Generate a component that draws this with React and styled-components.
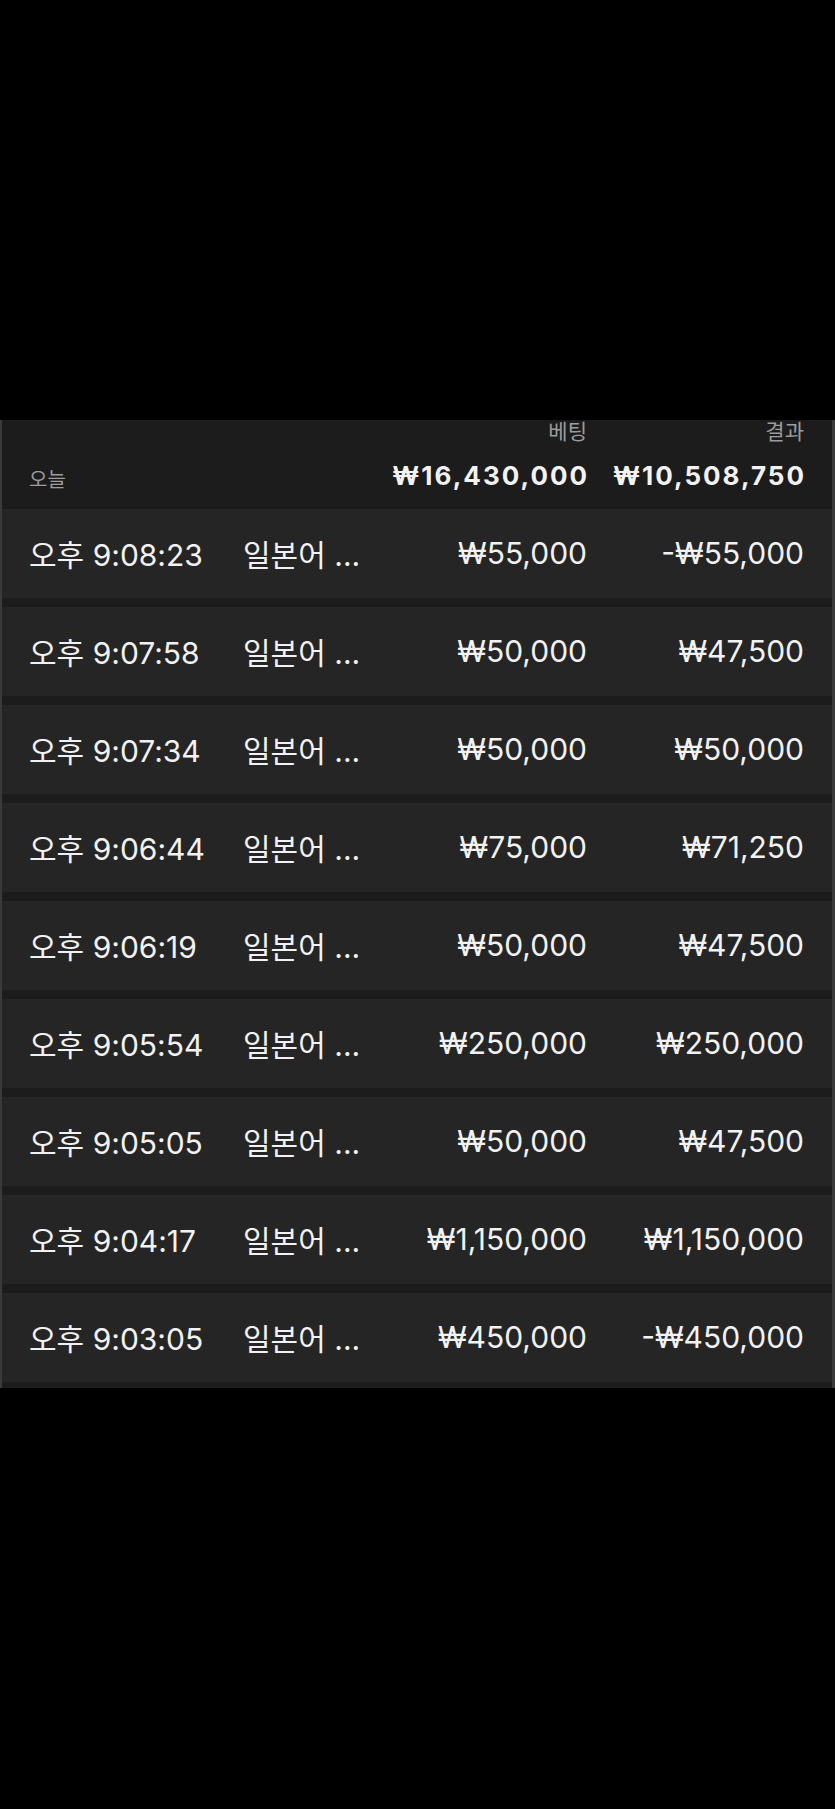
import styled, { createGlobalStyle } from "styled-components";

const GlobalStyle = createGlobalStyle`
  html, body {
    margin: 0;
    padding: 0;
    background: #000;
  }
  body {
    font-family: "Inter", "Noto Sans CJK KR", sans-serif;
    color: #f2f2f2;
  }
`;

const Page = styled.div`
  min-height: 1809px;
  padding-top: 420px;
  box-sizing: border-box;
  background: #000;
`;

const Panel = styled.div`
  border-left: 2px solid #3a3a3a;
  border-right: 3px solid #3a3a3a;
  background: #1c1c1c;
  padding-bottom: 6px;
`;

const columns = "214px 1fr auto 217px";

const Header = styled.div`
  display: grid;
  grid-template-columns: ${columns};
  grid-template-rows: 26px 63px;
  padding: 0 28px 0 27px;
  height: 89px;
  box-sizing: border-box;
`;

const Label = styled.div`
  grid-column: ${(p) => p.col};
  grid-row: 1;
  text-align: right;
  font-size: 21px;
  line-height: 28px;
  color: #9d9d9d;
  align-self: end;
`;

const Today = styled.div`
  grid-column: 1 / 3;
  grid-row: 2;
  font-size: 20px;
  color: #9d9d9d;
  padding-top: 18px;
`;

const Total = styled.div`
  grid-column: ${(p) => p.col};
  grid-row: 2;
  text-align: right;
  font-size: 26px;
  font-weight: 700;
  letter-spacing: 2px;
  margin-right: -2px;
  padding-top: 14px;
  color: #f2f2f2;
`;

const List = styled.div`
  display: flex;
  flex-direction: column;
  gap: 9px;
`;

const Row = styled.div`
  display: grid;
  grid-template-columns: ${columns};
  align-items: center;
  height: 89px;
  box-sizing: border-box;
  padding: 0 28px 2px 27px;
  background: #252525;
  font-size: 30px;
`;

const Cell = styled.div`
  text-align: ${(p) => (p.right ? "right" : "left")};
  white-space: nowrap;
`;

const rows = [
  ["오후 9:08:23", "₩55,000", "-₩55,000"],
  ["오후 9:07:58", "₩50,000", "₩47,500"],
  ["오후 9:07:34", "₩50,000", "₩50,000"],
  ["오후 9:06:44", "₩75,000", "₩71,250"],
  ["오후 9:06:19", "₩50,000", "₩47,500"],
  ["오후 9:05:54", "₩250,000", "₩250,000"],
  ["오후 9:05:05", "₩50,000", "₩47,500"],
  ["오후 9:04:17", "₩1,150,000", "₩1,150,000"],
  ["오후 9:03:05", "₩450,000", "-₩450,000"],
];

export default function App() {
  return (
    <Page>
      <GlobalStyle />
      <Panel>
        <Header>
          <Label col={3}>베팅</Label>
          <Label col={4}>결과</Label>
          <Today>오늘</Today>
          <Total col={3}>₩16,430,000</Total>
          <Total col={4}>₩10,508,750</Total>
        </Header>
        <List>
          {rows.map(([time, bet, result]) => (
            <Row key={time}>
              <Cell>{time}</Cell>
              <Cell>일본어 ...</Cell>
              <Cell right>{bet}</Cell>
              <Cell right>{result}</Cell>
            </Row>
          ))}
        </List>
      </Panel>
    </Page>
  );
}
